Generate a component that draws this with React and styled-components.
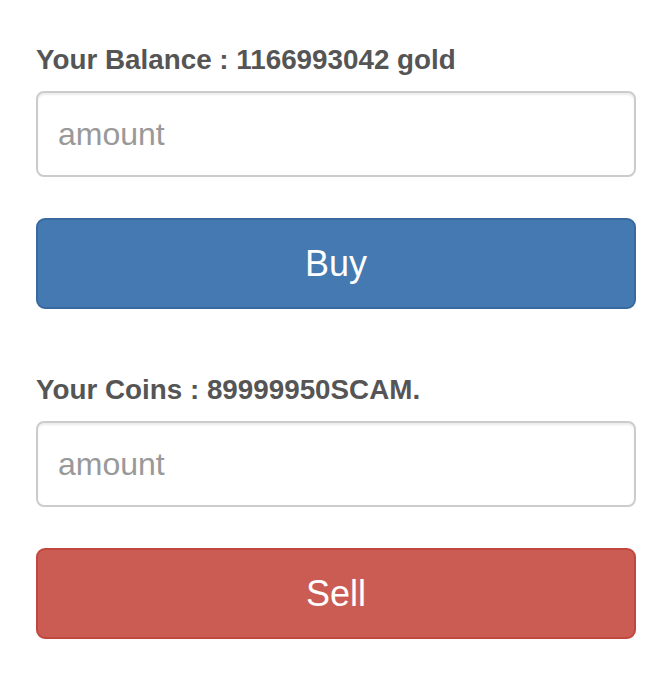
import { createGlobalStyle, styled } from "styled-components"

const GlobalStyle = createGlobalStyle`
body {
    margin: 0;
    background: #fff;
    font-family: "Liberation Sans", Arial, Helvetica, sans-serif;
}
`

const Page = styled.div`
display: flex;
flex-direction: column;
gap: 61px;
padding: 40px 28px 0 36px;
`

const Section = styled.form`
display: flex;
flex-direction: column;
`

const Label = styled.label`
display: block;
font-size: 27.8px;
font-weight: bold;
line-height: 40px;
color: #555;
margin-bottom: 11px;
`

const AmountInput = styled.input`
box-sizing: border-box;
width: 100%;
height: 86px;
padding: 0 20px;
font-family: inherit;
font-size: 32px;
color: #555;
border: 2px solid #ccc;
border-radius: 8px;
box-shadow: inset 0 2px 2px rgba(0, 0, 0, 0.075);
outline: none;
&::placeholder {
    color: #999;
}
`

const ActionButton = styled.button`
box-sizing: border-box;
width: 100%;
height: 91px;
margin-top: 41px;
font-family: inherit;
font-size: 36px;
color: #fff;
background: ${(p) => (p.$danger ? "#ca5c54" : "#4479b1")};
border: 2px solid ${(p) => (p.$danger ? "#c2473f" : "#386a9f")};
border-radius: 9px;
cursor: pointer;
`

const TradeBox = ({ label, action, danger }) => (
    <Section onSubmit={(e) => e.preventDefault()}>
        <Label>{label}</Label>
        <AmountInput type="text" placeholder="amount" />
        <ActionButton type="submit" $danger={danger}>{action}</ActionButton>
    </Section>
)

export default function App() {
    return (
        <>
            <GlobalStyle />
            <Page>
                <TradeBox label="Your Balance : 1166993042 gold" action="Buy" />
                <TradeBox label="Your Coins : 89999950SCAM." action="Sell" danger />
            </Page>
        </>
    )
}
